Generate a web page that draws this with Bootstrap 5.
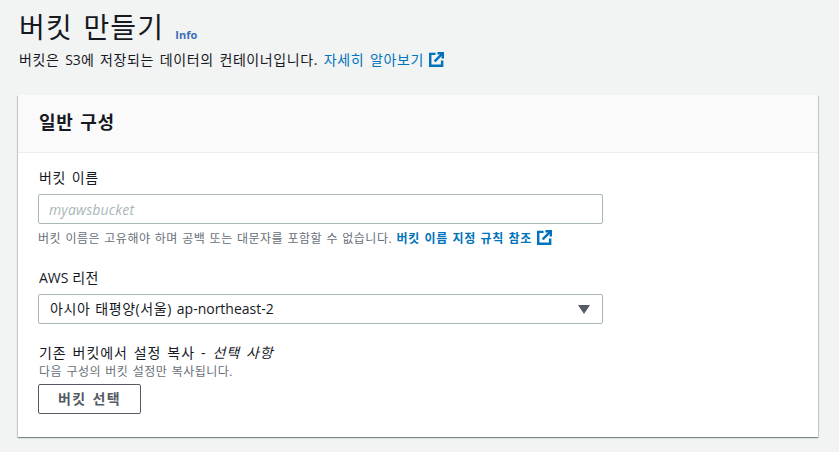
<!DOCTYPE html>
<html lang="ko">
<head>
<meta charset="utf-8">
<title>버킷 만들기</title>
<link href="https://cdn.jsdelivr.net/npm/bootstrap@5.3.0/dist/css/bootstrap.min.css" rel="stylesheet">
<style>
html,body{height:452px;overflow:hidden}
body{background:#f2f3f3;color:#16191f;font-family:"Open Sans","Noto Sans CJK KR",sans-serif;font-size:14px;line-height:20px;letter-spacing:.6px;word-spacing:1.5px}
.lat{letter-spacing:0;word-spacing:0}
.page-wrap{padding:9px 21px 0 18px}
.page-title{font-size:28px;line-height:36px;font-weight:400;margin:0 0 0 1px;letter-spacing:1.2px;word-spacing:2px}
.info-link{font-size:11px;font-weight:700;color:#3b6fb6;text-decoration:none;margin-left:11px;letter-spacing:0;position:relative;top:1px}
.page-desc{margin:-2px 0 0 1px;height:20px;line-height:20px}
.ext-link{color:#0073bb;text-decoration:none}
.ext-icon{width:15px;height:15px;margin-left:5px;vertical-align:-2px}
.panel{margin-top:25px;border:0;border-radius:0;background:#fff;box-shadow:0 1px 1px 0 rgba(0,28,36,.3),1px 1px 1px 0 rgba(0,28,36,.15),-1px 1px 1px 0 rgba(0,28,36,.15);height:342px}
.panel-head{background:#fafafa;border-bottom:1px solid #eaeded;height:58px;padding:0 21px 4px;display:flex;align-items:center}
.panel-head h2{font-size:18px;font-weight:700;margin:0;line-height:24px;letter-spacing:.8px;word-spacing:1px}
.panel-body{padding:15px 20px 0}
.fld-label{display:block;margin:0 0 6px 1px;line-height:20px}
.region-label{word-spacing:0;letter-spacing:.2px}
.fld-input{display:block;width:565px;height:30px;border:1px solid #aab7b8;border-radius:2px;padding:0 10px;font-size:14px;font-family:inherit;background:#fff;color:#16191f;letter-spacing:.15px}
.fld-input::placeholder{color:#aab7b8;font-style:italic;opacity:1}
.fld-hint{font-size:12px;line-height:16px;color:#687078;margin-top:6px;letter-spacing:.5px;word-spacing:.7px}
.fld-hint a{color:#0073bb;font-weight:700;text-decoration:none;letter-spacing:.7px}
.fld-select{width:565px;height:30px;border:1px solid #aab7b8;border-radius:2px;padding:0 11px;display:flex;align-items:center;justify-content:space-between;word-spacing:.5px}
.fld-caret{width:0;height:0;border-left:6px solid transparent;border-right:6px solid transparent;border-top:9px solid #545b64;margin-right:1px}
.gap-a{margin-top:21px}
.gap-b{margin-top:19px}
.copy-label{margin-left:1px;letter-spacing:.9px}
.copy-hint{margin:1px 0 0 1px}
.btn-outline{display:block;width:103px;height:30px;padding:0;margin-top:4px;border:1px solid #545b64;border-radius:2px;background:#fff;color:#545b64;font-weight:700;font-size:14px;line-height:28px;letter-spacing:1.4px;word-spacing:1px}
</style>
</head>
<body>
<div class="page-wrap">
  <h1 class="page-title">버킷 만들기<a class="info-link" href="#">Info</a></h1>
  <p class="page-desc">버킷은 <span class="lat">S3</span>에 저장되는 데이터의 컨테이너입니다. <a class="ext-link" href="#">자세히 알아보기<svg class="ext-icon" viewBox="0 0 16 16" fill="none" stroke="#0073bb" stroke-width="2.6"><path d="M7 2H1.3v12.7H14V9"/><path d="M6 10 14 2"/><path d="M9 1.3h5.7V7"/></svg></a></p>
  <div class="card panel">
    <div class="panel-head"><h2>일반 구성</h2></div>
    <div class="panel-body">
      <label class="fld-label" for="bn">버킷 이름</label>
      <input class="fld-input" id="bn" type="text" placeholder="myawsbucket">
      <div class="fld-hint">버킷 이름은 고유해야 하며 공백 또는 대문자를 포함할 수 없습니다. <a href="#">버킷 이름 지정 규칙 참조<svg class="ext-icon" viewBox="0 0 16 16" fill="none" stroke="#0073bb" stroke-width="2.6"><path d="M7 2H1.3v12.7H14V9"/><path d="M6 10 14 2"/><path d="M9 1.3h5.7V7"/></svg></a></div>
      <div class="gap-a">
        <div class="fld-label region-label"><span class="lat">AWS</span> 리전</div>
        <div class="fld-select"><span>아시아 태평양(서울) <span class="lat">ap-northeast-2</span></span><span class="fld-caret"></span></div>
      </div>
      <div class="gap-b">
        <div class="copy-label">기존 버킷에서 설정 복사 - <i>선택 사항</i></div>
        <div class="fld-hint copy-hint">다음 구성의 버킷 설정만 복사됩니다.</div>
        <button class="btn-outline" type="button">버킷 선택</button>
      </div>
    </div>
  </div>
</div>
</body>
</html>
